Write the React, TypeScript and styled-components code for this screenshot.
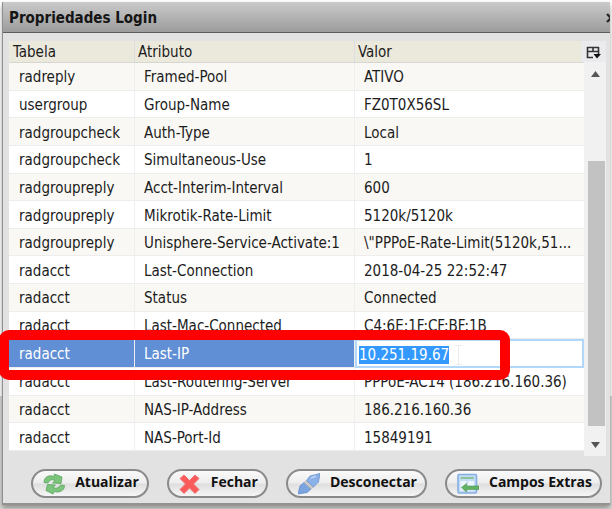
import React, { useEffect, useRef } from "react";
import styled, { createGlobalStyle } from "styled-components";

const GlobalStyle = createGlobalStyle`
  *, *::before, *::after { box-sizing: border-box; }
  body {
    margin: 0;
    overflow: hidden;
    background: linear-gradient(#ffffff 396px, #d9d9d6 396px) no-repeat;
    min-height: 100vh;
    font-family: "DejaVu Sans Condensed", "Noto Sans", Tahoma, sans-serif;
    font-size: 15px;
    color: #1c1c1c;
  }
  button { font: inherit; color: inherit; }
`;

const Window = styled.main`
  margin: 2px 2px 0 2px;
  border-left: 1px solid #8f8f8f;
  border-bottom: 2px solid #92928e;
  background: #e2e2e2;
  box-shadow: 0 3px 5px rgba(0, 0, 0, 0.35);
`;

const TitleBar = styled.header`
  display: flex;
  align-items: center;
  justify-content: space-between;
  height: 31px;
  padding: 2px 0 0 6px;
  overflow: hidden;
  border-bottom: 1px solid #5c5c5c;
  background: linear-gradient(#cacaca, #9c9c9c);
`;

const Title = styled.h1`
  margin: 0;
  font-size: 15px;
  line-height: 20px;
  font-weight: 700;
  color: #151515;
`;

const CloseButton = styled.button`
  display: flex;
  flex: none;
  margin-right: -6px;
  padding: 0;
  border: 0;
  background: none;
`;

const Body = styled.div`
  padding: 8px 4px 5px 6px;
`;

const Viewport = styled.section`
  display: grid;
  grid-template-columns: minmax(0, 1fr) 22px;
  height: 415px;
`;

const TableArea = styled.div`
  padding-bottom: 5px;
`;

const Table = styled.table`
  width: 100%;
  height: 410px;
  table-layout: fixed;
  border-collapse: separate;
  border-spacing: 0;
`;

const Column = styled.col<{ $width?: number }>`
  width: ${(p) => (p.$width ? `${p.$width}px` : "auto")};
`;

const HeadCell = styled.th`
  height: 22px;
  padding: 0 3px;
  border-bottom: 1px solid #d6d6d2;
  border-left: 1px solid #dcdce2;
  background: #ebe9db;
  font-weight: 400;
  line-height: 20px;
  text-align: left;
  &:first-child { border-left-color: #ebe9db; }
`;

const Row = styled.tr<{ $selected?: boolean }>`
  position: relative;
  z-index: ${(p) => (p.$selected ? 1 : "auto")};
  color: ${(p) => (p.$selected ? "#ffffff" : "inherit")};
  background: ${(p) => (p.$selected ? "#608fd5" : "#ffffff")};
  &:nth-child(odd) { background: ${(p) => (p.$selected ? "#608fd5" : "#f9f8f4")}; }
`;

const Cell = styled.td<{ $editing?: boolean }>`
  padding: ${(p) => (p.$editing ? "0" : "3px 4px 0 9px")};
  border-left: 1px solid #efefef;
  border-bottom: 1px solid #ededed;
  line-height: 23px;
  white-space: nowrap;
  &:first-child { border-left: 0; padding-left: 10px; }
`;

const ValueInput = styled.input`
  display: block;
  width: 100%;
  height: 29px;
  margin: -1px 0;
  padding: 3px 2px 0;
  border: 2px solid #b1d8fb;
  outline: none;
  background: #ffffff;
  color: #1c1c1c;
  font: inherit;
  &::selection { background: #3399ff; color: #ffffff; }
`;

const Highlight = styled.span`
  position: absolute;
  inset: -9px 74px -12px -10px;
  border: 10px solid #fe0000;
  border-radius: 10px;
  pointer-events: none;
`;

const TextCursor = styled.svg`
  position: absolute;
  top: 6px;
  left: 446px;
`;

const ScrollColumn = styled.div`
  display: flex;
  flex-direction: column;
  align-items: stretch;
  background: #f1f1f1;
`;

const ColumnPicker = styled.button`
  display: flex;
  align-items: center;
  justify-content: center;
  height: 21px;
  margin-left: -3px;
  padding: 1px 0 0;
  border: 0;
  background: #ebebee;
`;

const ArrowButton = styled.button<{ $tall?: boolean }>`
  display: flex;
  justify-content: center;
  align-items: ${(p) => (p.$tall ? "center" : "flex-start")};
  height: ${(p) => (p.$tall ? "30px" : "24px")};
  padding: ${(p) => (p.$tall ? "8px 2px 0" : "9px 2px 0")};
  border: 0;
  background: none;
`;

const Track = styled.div`
  display: flex;
  flex: 1;
  flex-direction: column;
  justify-content: flex-end;
  padding: 0 1px 0 4px;
`;

const Thumb = styled.div`
  height: 78%;
  background: #c2c2c2;
`;

const Actions = styled.footer`
  display: flex;
  justify-content: flex-end;
  gap: 18px;
  padding: 13px 4px 0 0;
`;

const ActionButton = styled.button`
  display: flex;
  align-items: center;
  gap: 10px;
  height: 29px;
  padding: 0 8px 0 10px;
  border: 2px solid #8a8a8a;
  border-radius: 15px;
  background: linear-gradient(#fafafa 0%, #ededed 48%, #dedede 52%, #f6f6f6 100%);
  && {
    font-family: "Open Sans", "Noto Sans", sans-serif;
    font-size: 14px;
    line-height: 20px;
    font-weight: 700;
    color: #111111;
  }
  white-space: nowrap;
`;

const ActionLabel = styled.span`
  padding-bottom: 3px;
`;

const Icon = styled.svg`
  flex: none;
  width: 22px;
  height: 22px;
`;

const RefreshIcon = () => (
  <Icon viewBox="0 0 22 22" aria-hidden="true">
    <g fill="#7cc47c" stroke="#5aa55f" strokeWidth="0.8" strokeLinejoin="round">
      <path d="M1 9.500C1 4 6 1.500 11 3.500L11.500 1L19 4L18 10.500L9.500 10L12 7.500C9 6 6.500 7 5 10Z" />
      <path d="M21.500 12.500C21.500 18 16 20 11 18.500L10 21L3 17.500L4.500 11.500L12.500 12L10 14.500C13 16 16 15 17.500 12Z" />
    </g>
  </Icon>
);

const CrossIcon = () => (
  <Icon viewBox="0 0 22 22" aria-hidden="true">
    <path
      d="M5 2L10.500 7.500L16 2L20 5.500L14.500 11L20 16.500L16 20.500L10.500 15L5 20.500L1 16.500L6.500 11L1 5.500Z"
      fill="#fb5a5a"
      stroke="#ef7474"
      strokeLinejoin="round"
    />
  </Icon>
);

const PlugIcon = () => (
  <Icon viewBox="0 0 22 22" aria-hidden="true">
    <path d="M0 21L2 13L6 9.500L13 16L9 19.500Z" fill="#7ba5e0" stroke="#5f8acb" strokeWidth="0.8" />
    <path d="M6 9.500L8.500 7.500L15.500 14L13 16Z" fill="#c9c9c9" stroke="#acacac" strokeWidth="0.6" />
    <path d="M8.500 7.500L12 3L22 0.500L20.500 9L15.500 14Z" fill="#8ab2e8" stroke="#6690cf" strokeWidth="0.8" />
    <path d="M13 5L18 3" stroke="#bfd6f5" strokeWidth="1.5" />
  </Icon>
);

const FieldsIcon = () => (
  <Icon viewBox="0 0 22 22" aria-hidden="true">
    <rect x="1" y="1.500" width="18.500" height="18.500" rx="1" fill="#c4dcf6" stroke="#86aee0" strokeWidth="1.6" />
    <rect x="3.500" y="4" width="13.500" height="2" fill="#8cc49a" />
    <rect x="3.500" y="8" width="6" height="9.500" fill="#edf5fd" />
    <rect x="11" y="8" width="6" height="9.500" fill="#edf5fd" />
    <path d="M4.500 14.500L9.500 10.500V13H22V16.500H9.500V19Z" fill="#62b264" stroke="#4b9850" strokeWidth="0.6" />
  </Icon>
);

const rows: [string, string, string][] = [
  ["radreply", "Framed-Pool", "ATIVO"],
  ["usergroup", "Group-Name", "FZ0T0X56SL"],
  ["radgroupcheck", "Auth-Type", "Local"],
  ["radgroupcheck", "Simultaneous-Use", "1"],
  ["radgroupreply", "Acct-Interim-Interval", "600"],
  ["radgroupreply", "Mikrotik-Rate-Limit", "5120k/5120k"],
  ["radgroupreply", "Unisphere-Service-Activate:1", "\\\"PPPoE-Rate-Limit(5120k,51..."],
  ["radacct", "Last-Connection", "2018-04-25 22:52:47"],
  ["radacct", "Status", "Connected"],
  ["radacct", "Last-Mac-Connected", "C4:6E:1F:CF:BF:1B"],
  ["radacct", "Last-IP", "10.251.19.67"],
  ["radacct", "Last-Routering-Server", "PPPoE-AC14 (186.216.160.36)"],
  ["radacct", "NAS-IP-Address", "186.216.160.36"],
  ["radacct", "NAS-Port-Id", "15849191"],
];

const SELECTED = "Last-IP";

const actions = [
  { label: "Atualizar", Glyph: RefreshIcon },
  { label: "Fechar", Glyph: CrossIcon },
  { label: "Desconectar", Glyph: PlugIcon },
  { label: "Campos Extras", Glyph: FieldsIcon },
];

export default function App() {
  const input = useRef<HTMLInputElement>(null);

  useEffect(() => {
    input.current?.focus();
    input.current?.select();
  }, []);

  return (
    <>
      <GlobalStyle />
      <Window>
        <TitleBar>
          <Title>Propriedades Login</Title>
          <CloseButton aria-label="Fechar janela">
            <svg width="10" height="10" viewBox="0 0 10 10">
              <path d="M1 1L9 9M9 1L1 9" stroke="#2b2b2b" strokeWidth="2.400" />
            </svg>
          </CloseButton>
        </TitleBar>
        <Body>
          <Viewport>
            <TableArea>
              <Table>
                <colgroup>
                  <Column $width={125} />
                  <Column $width={220} />
                  <Column />
                </colgroup>
                <thead>
                  <tr>
                    <HeadCell scope="col">Tabela</HeadCell>
                    <HeadCell scope="col">Atributo</HeadCell>
                    <HeadCell scope="col">Valor</HeadCell>
                  </tr>
                </thead>
                <tbody>
                  {rows.map(([table, attribute, value]) => {
                    const selected = attribute === SELECTED;
                    return (
                      <Row key={attribute} $selected={selected}>
                        <Cell>{table}</Cell>
                        <Cell>{attribute}</Cell>
                        <Cell $editing={selected}>
                          {selected ? (
                            <>
                              <ValueInput ref={input} aria-label={attribute} defaultValue={value} />
                              <TextCursor width="7" height="20" viewBox="0 0 7 20" aria-hidden="true">
                                <path d="M0 0.500H7M3.500 0V20M0 19.500H7" stroke="#ececec" fill="none" />
                              </TextCursor>
                              <Highlight />
                            </>
                          ) : (
                            value
                          )}
                        </Cell>
                      </Row>
                    );
                  })}
                </tbody>
              </Table>
            </TableArea>
            <ScrollColumn>
              <ColumnPicker aria-label="Colunas">
                <svg width="15" height="13" viewBox="0 0 15 13">
                  <path d="M1 1.500H13M1.500 1V11.500H7M1 5.500H13M7 1V6M12.500 1V8" stroke="#333333" strokeWidth="1.600" fill="none" />
                  <path d="M7.500 8H15L11 12.500Z" fill="#111111" />
                </svg>
              </ColumnPicker>
              <ArrowButton aria-label="Rolar para cima">
                <svg width="9" height="6" viewBox="0 0 9 6">
                  <path d="M0 6L4.500 0L9 6Z" fill="#555555" />
                </svg>
              </ArrowButton>
              <Track>
                <Thumb />
              </Track>
              <ArrowButton $tall aria-label="Rolar para baixo">
                <svg width="9" height="6" viewBox="0 0 9 6">
                  <path d="M0 0L4.500 6L9 0Z" fill="#555555" />
                </svg>
              </ArrowButton>
            </ScrollColumn>
          </Viewport>
          <Actions>
            {actions.map(({ label, Glyph }) => (
              <ActionButton key={label}>
                <Glyph />
                <ActionLabel>{label}</ActionLabel>
              </ActionButton>
            ))}
          </Actions>
        </Body>
      </Window>
    </>
  );
}
